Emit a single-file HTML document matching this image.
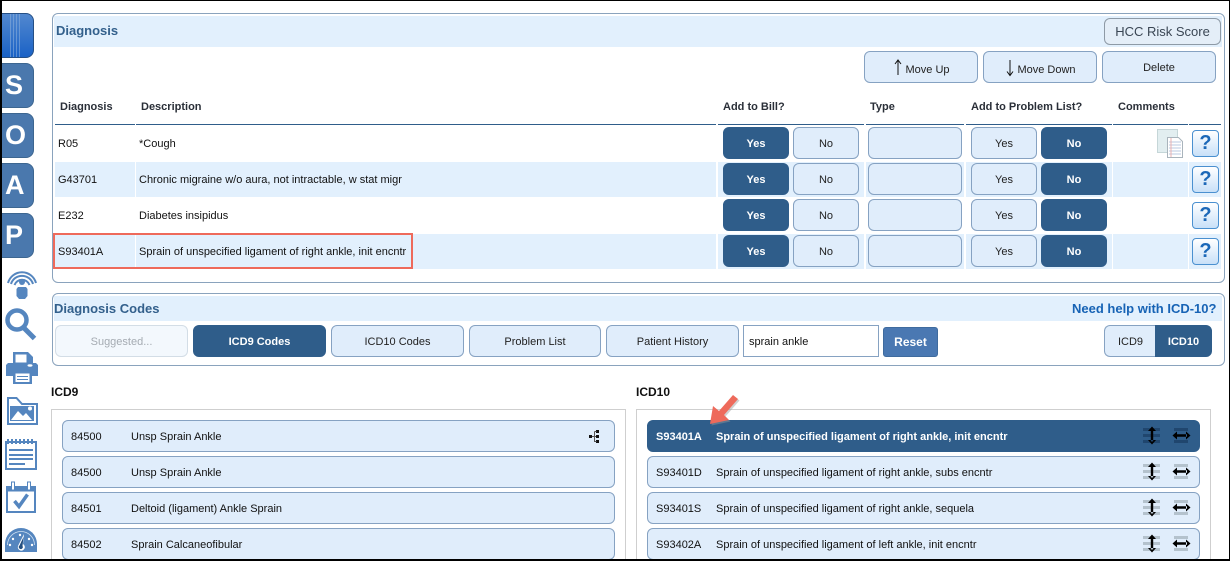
<!DOCTYPE html>
<html><head><meta charset="utf-8"><style>
html,body{margin:0;padding:0;background:#fff}
#p{position:relative;width:1230px;height:561px;overflow:hidden;background:#fff;font:11px/1 "Liberation Sans",sans-serif;color:#111}
#p div{position:absolute;box-sizing:border-box}
.frame{border:1px solid #8aa3bd;border-radius:6px;background:#fff}
.band{background:#e2f0fd}
.title{font-weight:bold;font-size:13px;color:#33608c;white-space:nowrap}
.btn{background:#e0edfb;border:1px solid #86a2c2;border-radius:6px;text-align:center;height:32px;line-height:32px;color:#222}
.on{background:#2f5d8a;border:1px solid #2f5d8a;color:#fff;font-weight:bold;border-radius:6px;text-align:center;height:32px;line-height:32px}
.th{font-weight:bold;color:#2a2f38;white-space:nowrap;top:102px}
.hl{height:1px;background:#2f5d8a;top:124px}
.t{white-space:nowrap}
.sb{left:2px;width:32px;height:45px;background:#4a78ad;border:1px solid #3d6690;border-left:0;border-radius:0 8px 8px 0;color:#fff;font-weight:bold;font-size:27px;line-height:42px;padding-left:3px}
.q{left:1192px;width:27px;height:27px;border:1px solid #4a90d0;border-radius:4px;background:linear-gradient(#fff,#c8e0f8);color:#1c68b8;font-size:20px;font-weight:bold;line-height:25px;text-align:center}
.r{height:32px;background:#e0edfb;border:1px solid #86a2c2;border-radius:6px;width:553px}
.c1{white-space:nowrap}
.sel{background:#2f5d8a;border-color:#2f5d8a}
</style></head><body><div id="p">

<!-- sidebar -->
<div style="left:2px;top:13px;width:32px;height:45px;background:linear-gradient(#5288cf,#1a62c6);border:1px solid #254f85;border-left:0;border-radius:0 8px 8px 0"></div>
<svg style="position:absolute;left:2px;top:14px" width="24" height="43"><g stroke="#8fb2dd" stroke-width="1" opacity=".55"><path d="M8.500 0V43M11.500 0V43M14.500 0V43M17.500 0V43"/></g></svg>
<div class="sb" style="top:63px">S</div>
<div class="sb" style="top:113px">O</div>
<div class="sb" style="top:163px">A</div>
<div class="sb" style="top:213px">P</div>
<svg style="position:absolute;left:0;top:260px" width="44" height="301" viewBox="0 260 44 301">
<g fill="none" stroke="#5586bf">
<path d="M8 283a14.500 14.500 0 0 1 28 0M11 284a11.500 11.500 0 0 1 22 0M14.500 285a8 8 0 0 1 15 0" stroke-width="2"/>
<circle cx="17" cy="320" r="9.500" stroke-width="4.500"/>
<path d="M24 328l10.500 10.500" stroke-width="5"/>
</g>
<g fill="#5586bf">
<circle cx="22" cy="282" r="3"/>
<path d="M18 287h8l1.500 2v7l-2.500 3h-6l-2.500-3v-7z"/>
<!-- printer -->
<path d="M13 352h15l5 5v8h-20z"/>
<path d="M8 363h28l2 2v11h-32v-11z"/>
<path d="M13 371h19v13h-19z"/>
</g>
<path d="M15.500 354.500h11v8h-11z" fill="#fff"/><path d="M15.500 373.500h14v8.500h-14z" fill="#fff"/>
<path d="M17 376.500h11M17 379.500h11" stroke="#5586bf"/><ellipse cx="30" cy="365.500" rx="2.500" ry="1.200" fill="#fff"/>
<!-- folder -->
<path d="M8 398v26h29v-20h-15l-5.500-6z" fill="none" stroke="#5586bf" stroke-width="2"/>
<path d="M10 406h24v15h-24z" fill="#5586bf"/>
<path d="M11 420l7-9 5 5 3-3 6 7z" fill="#fff"/><circle cx="30" cy="408.500" r="2" fill="#fff"/>
<!-- notepad -->
<path d="M6 442h30v27h-30z" fill="none" stroke="#5586bf" stroke-width="2"/>
<path d="M7 441.500h28" stroke="#5586bf" stroke-width="5" stroke-dasharray="2 2" fill="none"/>
<path d="M9 449h24v2h-24zM9 454h24v2h-24zM9 458h24v2h-24zM9 463h16v2h-16z" fill="#5586bf"/>
<!-- calendar -->
<path d="M7 487h28v25h-28z" fill="none" stroke="#5586bf" stroke-width="2"/>
<path d="M7 486h28v5.500h-28z" fill="#5586bf"/>
<path d="M11.500 482h3v8h-3zM27.500 482h3v8h-3z" fill="#fff" stroke="#5586bf"/>
<path d="M14.500 501l4.500 5.500 8.500-12" fill="none" stroke="#5586bf" stroke-width="3.500"/>
<!-- gauge -->
<path d="M5 552v-8a16 16 0 0 1 32 0v8z" fill="#5586bf"/>
<path d="M7.500 545a13.500 13.500 0 0 1 27 0" fill="none" stroke="#cfe0f2" stroke-width=".8"/>
<g fill="#fff"><circle cx="10" cy="545" r="1.200"/><circle cx="13" cy="539" r="1.200"/><circle cx="32" cy="545" r="1.200"/><circle cx="29" cy="539" r="1.200"/><circle cx="20" cy="535" r="1.200"/></g>
<path d="M24 534l-1 10a3.500 3.500 0 1 1-5 2z" fill="#fff"/><path d="M23.500 537l-1 9a2 2 0 1 1-3-0.500z" fill="#244f80"/>
</svg>

<!-- Diagnosis panel -->
<div class="frame" style="left:52px;top:13px;width:1173px;height:270px"></div>
<div class="band" style="left:54px;top:16px;width:1168px;height:31px"></div>
<div class="title" style="left:56px;top:24px">Diagnosis</div>
<div class="btn" style="left:1104px;top:18px;width:117px;height:27px;border-color:#8e9aa6;font-size:13px;line-height:25px;color:#3a4654;background:#e4eef8">HCC Risk Score</div>

<div class="btn" style="left:864px;top:51px;width:114px;padding-left:13px;line-height:36px">Move Up</div>
<div class="btn" style="left:983px;top:51px;width:114px;padding-left:13px;line-height:36px">Move Down</div>
<div class="btn" style="left:1102px;top:51px;width:114px">Delete</div>
<svg style="position:absolute;left:890px;top:58px" width="16" height="20"><path d="M8 2.500V17M5 6l3-4 3 4" fill="none" stroke="#111"/></svg>
<svg style="position:absolute;left:1002px;top:58px" width="16" height="20"><path d="M8 2V17M5 13.500l3 4 3-4" fill="none" stroke="#111"/></svg>

<div class="th" style="left:60px">Diagnosis</div>
<div class="th" style="left:141px">Description</div>
<div class="th" style="left:723px">Add to Bill?</div>
<div class="th" style="left:870px">Type</div>
<div class="th" style="left:971px">Add to Problem List?</div>
<div class="th" style="left:1118px">Comments</div>
<div class="hl" style="left:55px;width:80px"></div>
<div class="hl" style="left:136px;width:580px"></div>
<div class="hl" style="left:718px;width:146px"></div>
<div class="hl" style="left:866px;width:98px"></div>
<div class="hl" style="left:966px;width:146px"></div>
<div class="hl" style="left:1113px;width:75px"></div>
<div class="hl" style="left:1189px;width:32px"></div>

<!-- row bands -->
<div class="band" style="left:55px;top:162px;width:1166px;height:35px"></div>
<div class="band" style="left:55px;top:234px;width:1166px;height:35px"></div>
<div style="left:135px;top:126px;width:1px;height:143px;background:#fff"></div>
<div style="left:716px;top:126px;width:2px;height:143px;background:#fff"></div>
<div style="left:864px;top:126px;width:2px;height:143px;background:#fff"></div>
<div style="left:964px;top:126px;width:2px;height:143px;background:#fff"></div>
<div style="left:1112px;top:126px;width:1px;height:143px;background:#fff"></div>
<div style="left:1188px;top:126px;width:1px;height:143px;background:#fff"></div>

<div class="t" style="left:58px;top:139px">R05</div><div class="t" style="left:139px;top:139px">*Cough</div>
<div class="t" style="left:58px;top:175px">G43701</div><div class="t" style="left:139px;top:175px">Chronic migraine w/o aura, not intractable, w stat migr</div>
<div class="t" style="left:58px;top:211px">E232</div><div class="t" style="left:139px;top:211px">Diabetes insipidus</div>
<div class="t" style="left:58px;top:247px">S93401A</div><div class="t" style="left:139px;top:247px">Sprain of unspecified ligament of right ankle, init encntr</div>
<div style="left:53px;top:233px;width:360px;height:36px;border:2px solid #ee6a5b"></div>

<div class="on" style="left:723px;top:127px;width:66px">Yes</div><div class="btn" style="left:793px;top:127px;width:66px">No</div><div class="btn" style="left:868px;top:127px;width:94px"></div><div class="btn" style="left:971px;top:127px;width:66px">Yes</div><div class="on" style="left:1041px;top:127px;width:66px">No</div>
<div class="on" style="left:723px;top:163px;width:66px">Yes</div><div class="btn" style="left:793px;top:163px;width:66px">No</div><div class="btn" style="left:868px;top:163px;width:94px"></div><div class="btn" style="left:971px;top:163px;width:66px">Yes</div><div class="on" style="left:1041px;top:163px;width:66px">No</div>
<div class="on" style="left:723px;top:199px;width:66px">Yes</div><div class="btn" style="left:793px;top:199px;width:66px">No</div><div class="btn" style="left:868px;top:199px;width:94px"></div><div class="btn" style="left:971px;top:199px;width:66px">Yes</div><div class="on" style="left:1041px;top:199px;width:66px">No</div>
<div class="on" style="left:723px;top:235px;width:66px">Yes</div><div class="btn" style="left:793px;top:235px;width:66px">No</div><div class="btn" style="left:868px;top:235px;width:94px"></div><div class="btn" style="left:971px;top:235px;width:66px">Yes</div><div class="on" style="left:1041px;top:235px;width:66px">No</div>

<svg style="position:absolute;left:1156px;top:128px" width="30" height="30"><path d="M1.500 1.500h20v23h-20z" fill="#e2eef0" stroke="#c5d6d8"/><path d="M11.500 9.500h11l4 4v16h-15z" fill="#fff" stroke="#a9b4bc"/><path d="M13 14h12M13 17h12M13 20h12M13 23h12M13 26h12" stroke="#b8c8e0"/><path d="M15 10v19" stroke="#eab0b0"/></svg>
<div class="q" style="top:130px">?</div>
<div class="q" style="top:166px">?</div>
<div class="q" style="top:202px">?</div>
<div class="q" style="top:238px">?</div>

<!-- Diagnosis Codes panel -->
<div class="frame" style="left:52px;top:293px;width:1173px;height:73px"></div>
<div class="band" style="left:54px;top:296px;width:1168px;height:25px"></div>
<div class="title" style="left:54px;top:302px">Diagnosis Codes</div>
<div class="title" style="left:1072px;top:302px;color:#1763b5">Need help with ICD-10?</div>
<div class="btn" style="left:55px;top:325px;width:133px;background:#f3f8fd;border-color:#d3dde6;color:#a5abb2">Suggested...</div>
<div class="on" style="left:193px;top:325px;width:133px">ICD9 Codes</div>
<div class="btn" style="left:331px;top:325px;width:133px">ICD10 Codes</div>
<div class="btn" style="left:469px;top:325px;width:132px">Problem List</div>
<div class="btn" style="left:606px;top:325px;width:133px">Patient History</div>
<div style="left:743px;top:325px;width:136px;height:32px;border:1px solid #86a2c2;background:#fff;line-height:32px;padding-left:5px">sprain ankle</div>
<div style="left:883px;top:327px;width:55px;height:30px;background:#4a78b2;border:1px solid #3f6b9e;border-radius:3px;color:#fff;font-weight:bold;font-size:12px;text-align:center;line-height:28px">Reset</div>
<div class="btn" style="left:1104px;top:325px;width:52px;border-radius:6px 0 0 6px;border-right:0">ICD9</div>
<div class="on" style="left:1155px;top:325px;width:57px;border-radius:0 6px 6px 0">ICD10</div>

<!-- ICD lists -->
<div style="left:51px;top:386px;font-weight:bold;font-size:12px">ICD9</div>
<div style="left:636px;top:386px;font-weight:bold;font-size:12px">ICD10</div>
<div style="left:51px;top:409px;width:575px;height:160px;border:1px solid #cfcfcf;border-bottom:0"></div>
<div style="left:636px;top:409px;width:575px;height:160px;border:1px solid #cfcfcf;border-bottom:0"></div>

<div class="r" style="left:62px;top:420px"></div><div class="c1" style="left:71px;top:432px">84500</div><div class="c1" style="left:131px;top:432px">Unsp Sprain Ankle</div>
<div class="r" style="left:62px;top:456px"></div><div class="c1" style="left:71px;top:468px">84500</div><div class="c1" style="left:131px;top:468px">Unsp Sprain Ankle</div>
<div class="r" style="left:62px;top:492px"></div><div class="c1" style="left:71px;top:504px">84501</div><div class="c1" style="left:131px;top:504px">Deltoid (ligament) Ankle Sprain</div>
<div class="r" style="left:62px;top:528px"></div><div class="c1" style="left:71px;top:540px">84502</div><div class="c1" style="left:131px;top:540px">Sprain Calcaneofibular</div>
<svg style="position:absolute;left:588px;top:428px" width="18" height="16"><path d="M1 7h3v3h-3zM8 2h3v3h-3zM8 7h3v3h-3zM8 12h3v3h-3z" fill="#111"/><path d="M4 8.500h4M6.500 3.500v10h2M6.500 3.500h2" stroke="#555" fill="none"/></svg>

<div class="r sel" style="left:647px;top:420px"></div><div class="c1" style="left:656px;top:432px;color:#fff;font-weight:bold">S93401A</div><div class="c1" style="left:716px;top:432px;color:#fff;font-weight:bold">Sprain of unspecified ligament of right ankle, init encntr</div>
<div class="r" style="left:647px;top:456px"></div><div class="c1" style="left:656px;top:468px">S93401D</div><div class="c1" style="left:716px;top:468px">Sprain of unspecified ligament of right ankle, subs encntr</div>
<div class="r" style="left:647px;top:492px"></div><div class="c1" style="left:656px;top:504px">S93401S</div><div class="c1" style="left:716px;top:504px">Sprain of unspecified ligament of right ankle, sequela</div>
<div class="r" style="left:647px;top:528px"></div><div class="c1" style="left:656px;top:540px">S93402A</div><div class="c1" style="left:716px;top:540px">Sprain of unspecified ligament of left ankle, init encntr</div>

<svg style="position:absolute;left:1140px;top:424px" width="52" height="136" viewBox="0 0 52 136">
<g fill="none" stroke-width="3">
<path d="M3 5.500h17M3 11.500h17M3 17.500h17M34 5.500h14M34 17.500h14" stroke="#20466e"/>
<path d="M3 41.500h17M3 47.500h17M3 53.500h17M34 41.500h14M34 53.500h14M3 77.500h17M3 83.500h17M3 89.500h17M34 77.500h14M34 89.500h14M3 113.500h17M3 119.500h17M3 125.500h17M34 113.500h14M34 125.500h14" stroke="#b4c2cd"/>
</g>
<g id="a" fill="#000"><path d="M10.800 6h2.400v11.500h-2.400zM12 2.500l4 4.500h-8zM12 20.500l4-4.500h-8zM36 10.300h11v2.400h-11zM32.500 11.500l4.500-4v8zM50.500 11.500l-4.500-4v8z"/></g>
<g fill="#000" transform="translate(0,36)"><path d="M10.800 6h2.400v11.500h-2.400zM12 2.500l4 4.500h-8zM12 20.500l4-4.500h-8zM36 10.300h11v2.400h-11zM32.500 11.500l4.500-4v8zM50.500 11.500l-4.500-4v8z"/></g>
<g fill="#000" transform="translate(0,72)"><path d="M10.800 6h2.400v11.500h-2.400zM12 2.500l4 4.500h-8zM12 20.500l4-4.500h-8zM36 10.300h11v2.400h-11zM32.500 11.500l4.500-4v8zM50.500 11.500l-4.500-4v8z"/></g>
<g fill="#000" transform="translate(0,108)"><path d="M10.800 6h2.400v11.500h-2.400zM12 2.500l4 4.500h-8zM12 20.500l4-4.500h-8zM36 10.300h11v2.400h-11zM32.500 11.500l4.500-4v8zM50.500 11.500l-4.500-4v8z"/></g>
</svg>

<!-- red arrow -->
<svg style="position:absolute;left:700px;top:390px" width="50" height="40"><path d="M10 34L13 16L19 21L33 5L38 9L24 25L29 30Z" fill="#999" opacity=".45" transform="translate(1.500,1.500)"/><path d="M10 34L13 16L19 21L33 5L38 9L24 25L29 30Z" fill="#ee6a5b"/></svg>

<!-- screenshot border -->
<div style="left:0;top:0;width:2px;height:561px;background:#000"></div>
<div style="left:0;top:0;width:1230px;height:1px;background:#000"></div>
<div style="left:0;top:559px;width:1230px;height:2px;background:#000"></div>
<div style="left:1229px;top:0;width:1px;height:561px;background:#000"></div>
</div></body></html>
